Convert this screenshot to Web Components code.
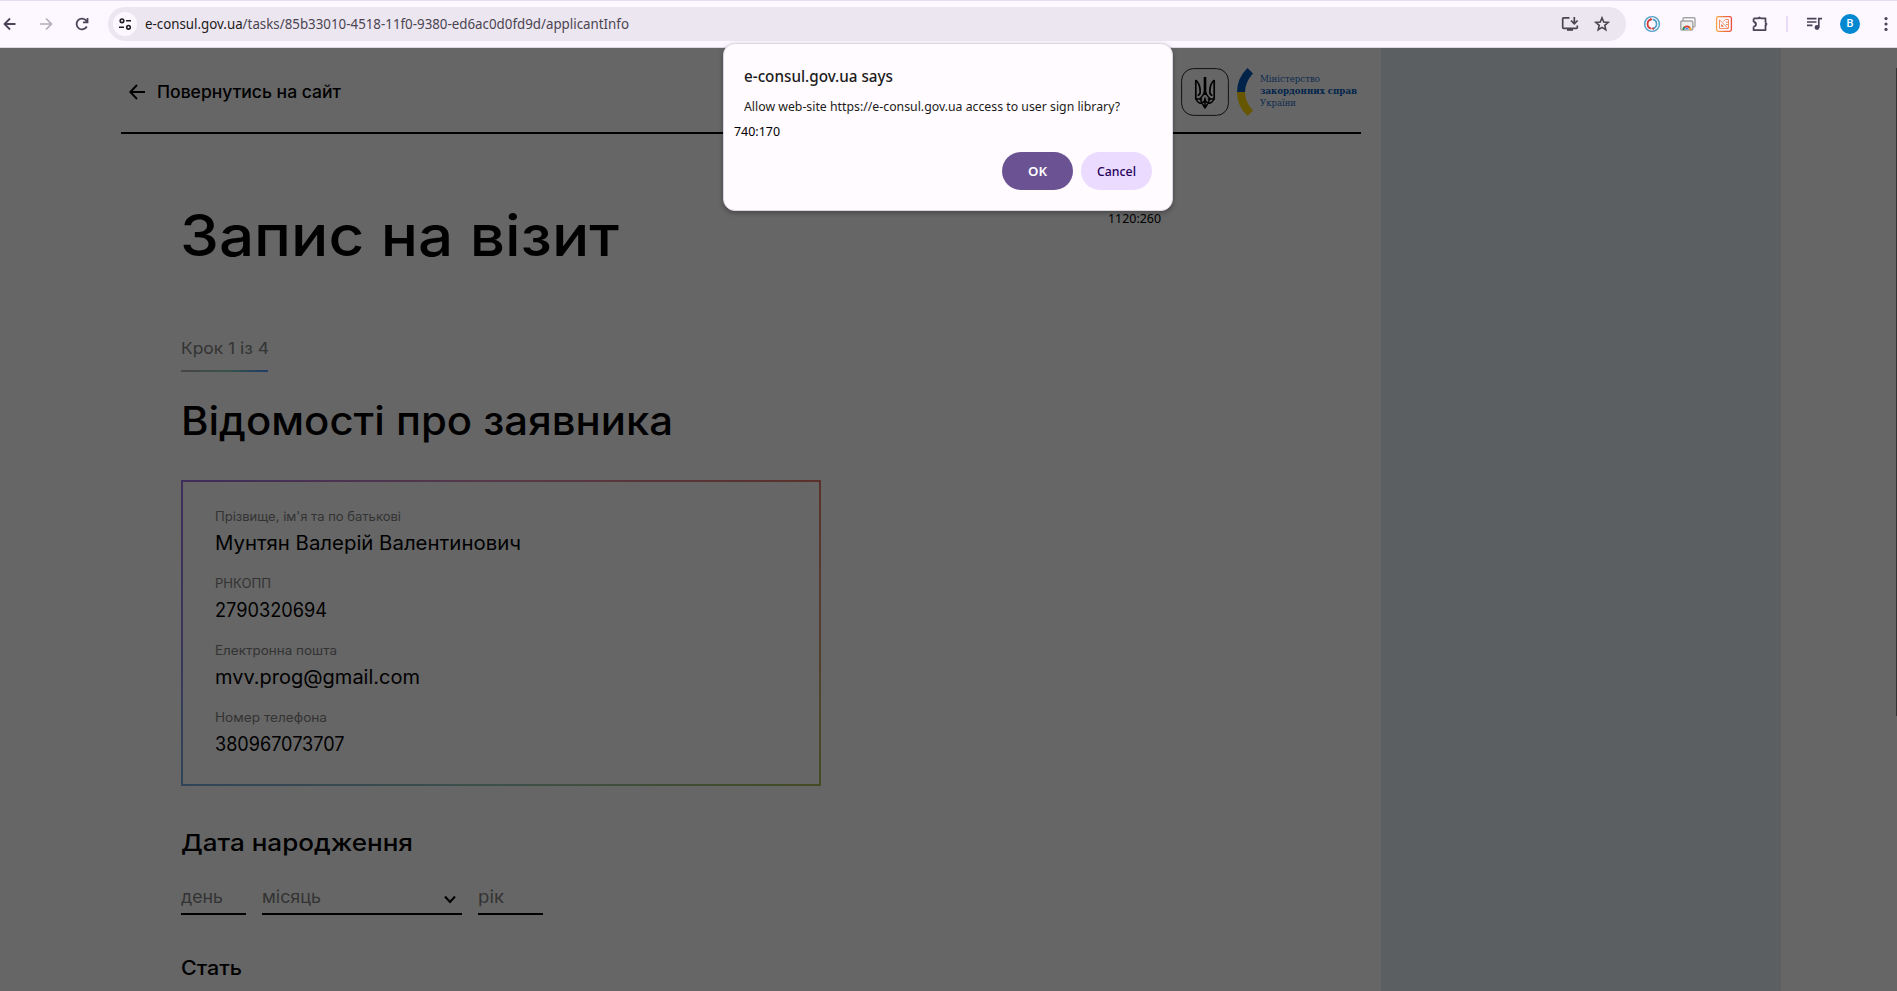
<!DOCTYPE html>
<html lang="uk">
<head>
<meta charset="utf-8">
<title>e-consul.gov.ua</title>
<style>
  html, body { margin: 0; height: 100%; overflow: hidden; background: #666; }
  body { font-family: Inter, "Liberation Sans", sans-serif; }
</style>
</head>
<body>
<app-window></app-window>
<script>
const define = (name, html, init) => customElements.define(name, class extends HTMLElement {
  constructor() {
    super();
    const t = document.createElement('template');
    t.innerHTML = html;
    this.attachShadow({ mode: 'open' }).append(t.content.cloneNode(true));
  }
  connectedCallback() { if (init) init(this, this.shadowRoot); }
});

/* One line of text stretched to a given advance width. */
define('fit-text', `<style>
  :host { display: block; flex: none; white-space: nowrap; }
  span { display: inline-block; transform-origin: 0 50%; vertical-align: top; }
</style><span><slot></slot></span>`, (el, root) => {
  const w = +el.getAttribute('w'), s = root.querySelector('span');
  el.style.width = w + 'px';
  queueMicrotask(() => {
    const n = s.getBoundingClientRect().width;
    if (n) s.style.transform = `scaleX(${w / n})`;
  });
});

define('tool-bar', `<style>
  :host { display: flex; box-sizing: border-box; height: 48px; align-items: center; background: #fdf7ff;
    border-top: 1px solid #e6deef; border-bottom: 1px solid #dcd6de; font-family: "Noto Sans", "Open Sans", sans-serif; }
  svg { display: block; flex: none; }
  .nav { display: flex; flex: none; gap: 16px; width: 108px; }
  .url { display: flex; flex: none; align-items: center; box-sizing: border-box; width: 1518px; height: 34px; border-radius: 17px; background: #ece6f0; padding-left: 5px; }
  .site { display: grid; place-items: center; width: 24px; height: 24px; border-radius: 12px; background: #fdf7ff; margin-right: 8px; }
  fit-text { font-size: 14px; line-height: 20px; color: #4b4551; }
  b { font-weight: 400; color: #1d1b20; }
  .in { display: flex; gap: 12px; margin-left: auto; margin-right: 14px; }
  .ext { display: flex; flex: none; align-items: center; gap: 16px; margin-left: 16px; }
  .sep { width: 2px; height: 16px; background: #e9dcfb; }
  .ava { display: grid; place-items: center; width: 20px; height: 20px; border-radius: 50%; background: #0288d1; color: #fff; font: 500 11px/20px Roboto, sans-serif; }
</style>
<div class="nav">
  <svg width="20" height="20" viewBox="0 0 20 20" fill="none" stroke="#4b4458" stroke-width="1.8"><path d="M15.5 10H5M10 4.5 4.5 10l5.500 5.500"/></svg>
  <svg width="20" height="20" viewBox="0 0 20 20" fill="none" stroke="#b3adb7" stroke-width="1.700"><path d="M4 10h11M10 4.500 15.500 10 10 15.500"/></svg>
  <svg width="20" height="20" viewBox="0 0 20 20" fill="none" stroke="#4b4458" stroke-width="1.800"><path d="M14.800 12.500A5.400 5.400 0 1 1 14.300 6.700L15 7.600M15.500 4v4.300H11"/></svg>
</div>
<div class="url">
  <div class="site"><svg width="14" height="14" viewBox="0 0 14 14" fill="none" stroke="#1d1b20" stroke-width="1.600"><circle cx="4" cy="3.800" r="1.800"/><path d="M8 3.800h5M1 10.300h5"/><circle cx="10.500" cy="10.300" r="1.800"/></svg></div>
  <fit-text w="484"><b>e-consul.gov.ua</b>/tasks/85b33010-4518-11f0-9380-ed6ac0d0fd9d/applicantInfo</fit-text>
  <div class="in">
    <svg width="20" height="20" viewBox="0 0 20 20" fill="none" stroke="#4b4551" stroke-width="1.700"><path d="M9.500 3.800H3.500q-.8 0-.8.800v9q0 .8.800.8h13q.8 0 .8-.8V11.500"/><path d="M7 15.500h6" stroke-width="2.600"/><path d="M14.300 3v6.500M11 6.500l3.300 3.300 3.300-3.300"/></svg>
    <svg width="20" height="20" viewBox="0 0 20 20" fill="none" stroke="#4b4551" stroke-width="1.600"><path d="M10 3.800l1.700 4.200 4.500.4-3.400 3 1 4.400L10 13.400l-3.800 2.400 1-4.400-3.400-3 4.500-.4z"/></svg>
  </div>
</div>
<div class="ext">
  <svg width="20" height="20" viewBox="0 0 20 20" fill="none"><circle cx="10" cy="10" r="7.400" stroke="#4b9fc8" stroke-width="1.400"/><path d="M10.800 5.400a4.700 4.700 0 0 1 0 9.200" stroke="#4b9fc8" stroke-width="1.600"/><path d="M9.300 5.400a4.700 4.700 0 0 0 0 9.200" stroke="#cf3b36" stroke-width="1.800"/><path d="M8 3.800l2.500 1.400L8.600 7zM12 16.200l-2.500-1.400 1.900-1.700z" fill="#cf3b36"/></svg>
  <svg width="20" height="20" viewBox="0 0 20 20"><rect x="5" y="3.800" width="12" height="9" rx="1" fill="#fff" stroke="#a5a3a6" stroke-width="1.400"/><rect x="2.800" y="7" width="12" height="9" rx="1" fill="#eee" stroke="#a5a3a6" stroke-width="1.400"/><path d="M4.500 15.800a4.400 4.400 0 0 1 8.800 0z" fill="#db4437"/><path d="M4.500 15.800a4.400 4.400 0 0 1 1.200-3.200l2.600 3.200z" fill="#0f9d58"/><path d="M13.300 15.800a4.400 4.400 0 0 0-1-2.700l-2.500 2.700z" fill="#f4b400"/><path d="M6.700 15.800a2.200 2.200 0 0 1 4.400 0z" fill="#3f7df0" stroke="#fff" stroke-width=".5"/></svg>
  <svg width="20" height="20" viewBox="0 0 20 20" fill="none"><defs><linearGradient id="o"><stop stop-color="#f5a544"/><stop offset="1" stop-color="#e94f3c"/></linearGradient></defs><rect x="2.600" y="2.600" width="14.800" height="14.800" rx="1.800" stroke="url(#o)" stroke-width="1.300"/><path d="M5.500 14.500V5.800l8.600 8.700zM7.500 12.500v-2l2 2zM9.500 7.500l2-2h3v9M12 8.200h2.500M12 10.500h2.500" stroke="#f09065"/></svg>
  <svg width="20" height="20" viewBox="0 0 20 20" fill="none" stroke="#4b4458" stroke-width="1.800" stroke-linejoin="round"><path d="M3.600 4.400h4.600M11 4.400h4.500v4.200M15.500 11v5.100H3.600v-3.700M3.600 8V4.400M3.600 8q2.400.2 2.400 2.200t-2.400 2.200"/><path d="M7.900 4.600a1.500 1.500 0 0 1 3 0zM15.400 8.500a1.500 1.500 0 0 1 0 3z" fill="#4b4458" stroke-width="1"/></svg>
  <div class="sep"></div>
  <svg width="20" height="20" viewBox="0 0 20 20" fill="none" stroke="#4b4458" stroke-width="1.700"><path d="M3 4.600h9.500M3 8h9.500M3 11.400h5.500M14.800 13.500V4.600H18"/><circle cx="13" cy="13.500" r="2.400" fill="#4b4458" stroke="none"/></svg>
  <div class="ava">B</div>
  <svg width="20" height="20" viewBox="0 0 20 20" fill="#4b4458"><circle cx="10" cy="4.600" r="1.600"/><circle cx="10" cy="10" r="1.600"/><circle cx="10" cy="15.400" r="1.600"/></svg>
</div>`);

define('site-header', `<style>
  :host { display: flex; align-items: center; box-sizing: border-box; width: 1240px; height: 86px; margin-left: 121px; padding: 20px 0 16px 8px; border-bottom: 2px solid #000; }
  svg { display: block; flex: none; }
  .back { margin-left: 11px; font-size: 17px; font-weight: 450; line-height: 20px; color: #000; }
  .logos { display: flex; align-items: center; margin-left: auto; width: 180px; }
  .arc { margin-left: 8px; }
  .min { margin: -2px 0 0 7px; font: 9.500px/12px "DejaVu Serif", serif; color: #0d2b4e; }
  .min .b { font-weight: 700; color: #00234a; }
</style>
<svg width="17" height="16" viewBox="0 0 17 16" fill="none" stroke="#000" stroke-width="1.900"><path d="M16 8H1.500M8 1 1.300 8 8 15"/></svg>
<fit-text class="back" w="184">Повернутись на сайт</fit-text>
<div class="logos">
  <svg width="48" height="48" viewBox="0 0 48 48" fill="none" stroke="#111"><rect x=".6" y=".6" width="46.800" height="46.800" rx="12"/>
    <g stroke="#000" stroke-width="1.700" stroke-linejoin="round"><path d="M14.800 12v19h6.500M33.200 12v19h-6.500"/><path d="M14.800 12q4.700 4.500 4.400 12-.2 3-2.600 3.500M33.200 12q-4.700 4.500-4.400 12 .2 3 2.600 3.500"/><path d="M24 9v18" stroke-width="2.600"/><path d="M24 22q-.8 5-5 8.500 2 5.500 5 9.500 3-4 5-9.500-4.200-3.500-5-8.500zM15 31q2 4.500 5.500 4.200M33 31q-2 4.500-5.500 4.200M20 35.200q4-.7 4-5.200 0 4.500 4 5.200M24 33v7" stroke-width="1.500"/></g></svg>
  <svg class="arc" width="16" height="48" viewBox="0 0 16 48"><path d="M10.500 0Q0 10 0 24h8q0-10 8-18.500z" fill="#00234a"/><path d="M10.500 48Q0 38 0 24h8q0 10 8 18.500z" fill="#665600"/></svg>
  <div class="min"><fit-text w="60">Міністерство</fit-text><fit-text class="b" w="97">закордонних справ</fit-text><fit-text w="36">України</fit-text></div>
</div>`);

define('info-item', `<style>
  :host { display: block; }
  .l { font-size: 12.500px; line-height: 17px; color: #333; }
  .v { font-size: 19.500px; line-height: 24px; margin-top: 6px; color: #000; }
</style><fit-text class="l"></fit-text><fit-text class="v"></fit-text>`, (el, root) => {
  for (const k of ['l', 'v']) {
    const f = root.querySelector('.' + k), [w, t] = el.getAttribute(k).split('|');
    const n = document.createElement('fit-text');
    n.className = k; n.setAttribute('w', w); n.textContent = t;
    f.replaceWith(n);
  }
});

define('info-card', `<style>
  :host { display: flex; flex-direction: column; gap: 20px; box-sizing: border-box; width: 640px; height: 306px; padding: 28px 33.500px;
    background:
      linear-gradient(90deg, #3f2d5a, #563847 50%, #5a312b) 0 0 / 100% 2px no-repeat,
      linear-gradient(90deg, #304458, #3d5049 50%, #444c24) 0 100% / 100% 2px no-repeat,
      linear-gradient(#3f2d5a, #393559 50%, #304458) 0 0 / 2px 100% no-repeat,
      linear-gradient(#5a312b, #553e2e 50%, #444c24) 100% 0 / 2px 100% no-repeat; }
</style><slot></slot>`);

define('line-field', `<style>
  :host { display: flex; box-sizing: border-box; height: 28px; border-bottom: 2px solid #000; font-size: 17px; line-height: 20px; color: #333; }
  .chev { display: none; margin: 8px 6px 0 auto; }
  :host([select]) .chev { display: block; }
</style><slot></slot><svg class="chev" width="12" height="10" viewBox="0 0 12 10" fill="none" stroke="#000" stroke-width="2"><path d="M1 1.500 6 7l5-5.500"/></svg>`);

define('visit-form', `<style>
  :host { display: block; margin-left: 181px; color: #000; }
  .h1 { margin: 66px 0 0 -1px; font-size: 57.500px; font-weight: 500; line-height: 70px; }
  .step { margin-top: 68px; font-size: 16.500px; line-height: 20px; color: #333; }
  .bar { width: 87px; height: 2px; margin-top: 12px; background: linear-gradient(90deg, #484444, #37544a 55%, #1f3a66); }
  .h2 { margin: 25px 0 35px; font-size: 39px; font-weight: 450; line-height: 48px; }
  .h3 { margin: 42px 0 0; font-size: 23.500px; font-weight: 450; line-height: 30px; }
  .date { display: grid; grid-template-columns: 65px 200px 65px; gap: 16px; margin-top: 29px; }
  .h4 { margin: 41px 0 0 -.5px; font-size: 19.500px; font-weight: 450; line-height: 24px; }
</style>
<fit-text class="h1" w="439">Запис на візит</fit-text>
<fit-text class="step" w="88">Крок 1 із 4</fit-text>
<div class="bar"></div>
<fit-text class="h2" w="492">Відомості про заявника</fit-text>
<info-card>
  <info-item l="186|Прізвище, ім'я та по батькові" v="306|Мунтян Валерій Валентинович"></info-item>
  <info-item l="56|РНКОПП" v="112|2790320694"></info-item>
  <info-item l="122|Електронна пошта" v="205|mvv.prog@gmail.com"></info-item>
  <info-item l="112|Номер телефона" v="129.5|380967073707"></info-item>
</info-card>
<fit-text class="h3" w="232">Дата народження</fit-text>
<div class="date">
  <line-field><fit-text w="42">день</fit-text></line-field>
  <line-field select><fit-text w="59">місяць</fit-text></line-field>
  <line-field><fit-text w="26">рік</fit-text></line-field>
</div>
<fit-text class="h4" w="61">Стать</fit-text>`);

define('alert-dialog', `<style>
  :host { display: block; box-sizing: border-box; width: 450px; height: 168px; padding: 21px 20px 0; border-radius: 12px; background: #fffbff; border: 1px solid #dcd6e0;
    box-shadow: 0 2px 5px rgba(0,0,0,.3); font-family: "Noto Sans", "Open Sans", sans-serif; color: #1d1b20; }
  .t { font-size: 15.500px; font-weight: 500; line-height: 22px; }
  .m { margin-top: 9px; font-size: 13px; line-height: 20px; }
  .c { margin: 5px 0 0 -10px; font-size: 13px; line-height: 20px; color: #000; }
  .btns { display: flex; justify-content: flex-end; gap: 8px; margin-top: 11px; }
  .btns div { display: grid; place-items: center; width: 71px; height: 38px; border-radius: 19px; font-size: 13px; line-height: 20px; font-weight: 500; }
  .ok { background: #6b5293; color: #fff; } .ok fit-text { font-weight: 600; }
  .no { background: #eadbff; color: #25005a; }
</style>
<fit-text class="t" w="149">e-consul.gov.ua says</fit-text>
<fit-text class="m" w="376">Allow web-site https://e-consul.gov.ua access to user sign library?</fit-text>
<fit-text class="c" w="46">740:170</fit-text>
<div class="btns"><div class="ok"><fit-text w="19">OK</fit-text></div><div class="no"><fit-text w="39">Cancel</fit-text></div></div>`);

define('app-window', `<style>
  :host { display: flex; flex-direction: column; position: relative; width: 1897px; height: 991px; overflow: hidden; background: #666; }
  main { display: flex; flex: 1; min-height: 0; overflow: hidden; }
  .page { width: 1381px; }
  .side { width: 400px; background: #5b5f61; }
  .scroll { width: 1px; height: 648px; margin: 20px 0 0 auto; background: #333; }
  alert-dialog { position: absolute; left: 723px; top: 43px; }
  .coord { position: absolute; left: 1108px; top: 208px; font: 13px/20px "Noto Sans", sans-serif; color: #000; }
</style>
<tool-bar></tool-bar>
<main><div class="page"><site-header></site-header><visit-form></visit-form></div><div class="side"></div><div class="scroll"></div></main>
<fit-text class="coord" w="53">1120:260</fit-text>
<alert-dialog></alert-dialog>`);
</script>
</body>
</html>
